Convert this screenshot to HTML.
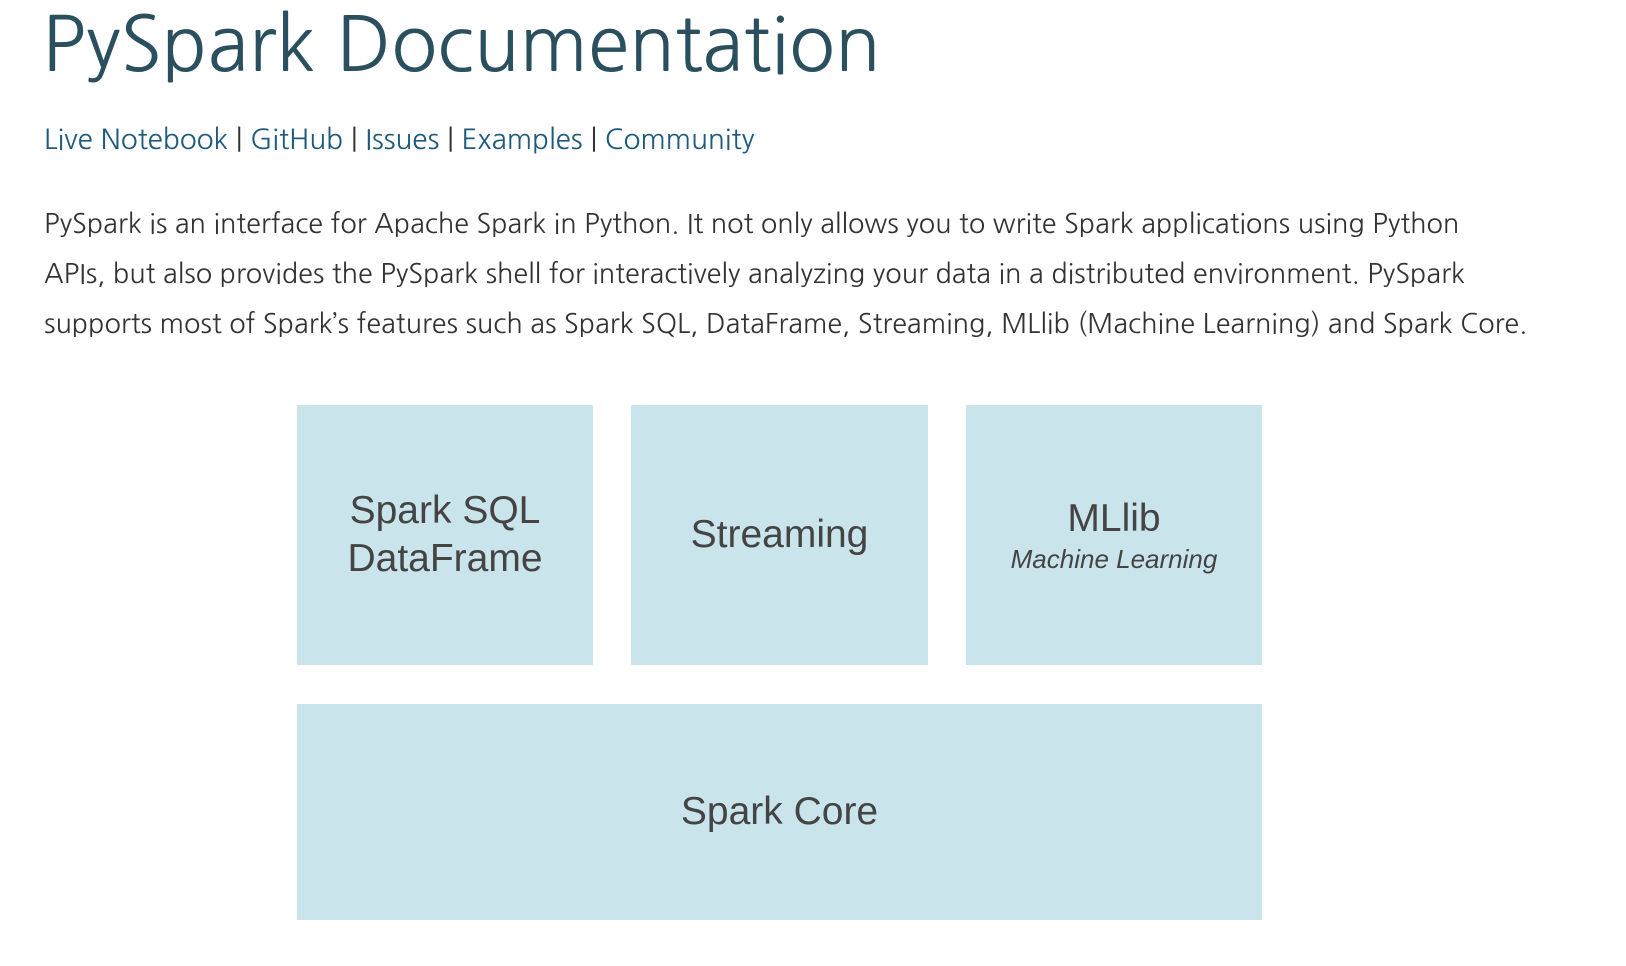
<!DOCTYPE html>
<html><head><meta charset="utf-8"><style>
body{margin:0;background:#fff;width:1626px;height:966px;overflow:hidden;position:relative;font-family:"NanumGothic","Liberation Sans",sans-serif;}
h1{position:absolute;left:42px;top:-3px;margin:0;font-weight:normal;font-size:75.5px;color:#2a4f5f;white-space:nowrap;font-family:"NanumGothic","Liberation Sans",sans-serif;}
.links{position:absolute;left:44px;top:123px;font-size:28px;color:#1d5a7e;white-space:nowrap;letter-spacing:-0.1px}
.links span{color:#333}
.p{position:absolute;left:44px;top:199px;font-size:27px;line-height:50px;color:#333;white-space:nowrap}
.b{position:absolute;background:#cae4eb;display:flex;flex-direction:column;align-items:center;justify-content:center;font-family:"Liberation Sans",sans-serif;color:#444;font-size:39px;line-height:48px;text-align:center}
.b i{font-size:26px;line-height:32px}
</style></head><body>
<h1>PySpark Documentation</h1>
<div class="links">Live Notebook <span>|</span> GitHub <span>|</span> Issues <span>|</span> Examples <span>|</span> Community</div>
<div class="p">PySpark is an interface for Apache Spark in Python. It not only allows you to write Spark applications using Python<br>APIs, but also provides the PySpark shell for interactively analyzing your data in a distributed environment. PySpark<br>supports most of Spark’s features such as Spark SQL, DataFrame, Streaming, MLlib (Machine Learning) and Spark Core.</div>
<div class="b" style="left:297px;top:405px;width:296px;height:260px">Spark SQL<br>DataFrame</div>
<div class="b" style="left:631px;top:405px;width:297px;height:260px">Streaming</div>
<div class="b" style="left:966px;top:405px;width:296px;height:260px">MLlib<i>Machine Learning</i></div>
<div class="b" style="left:297px;top:704px;width:965px;height:216px">Spark Core</div>
</body></html>
